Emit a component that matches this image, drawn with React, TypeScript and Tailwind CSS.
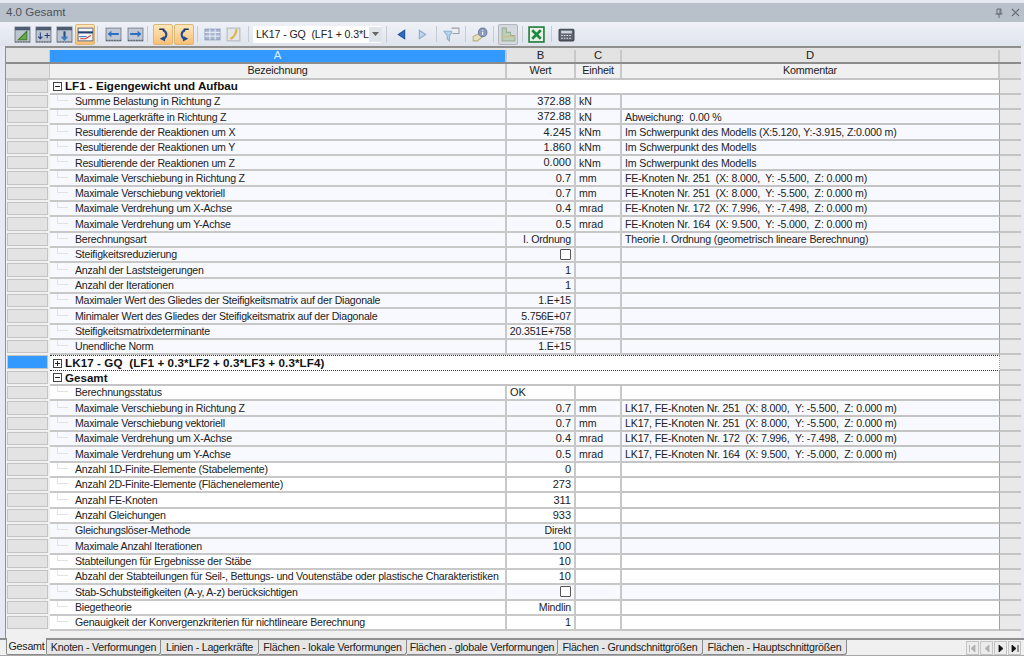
import type { ReactNode } from 'react';

type Row = {
  kind?: 'group' | 'selected';
  open?: boolean;
  a: string;
  b?: string;
  c?: string;
  d?: string;
  check?: boolean;
  left?: boolean;
  tint?: boolean;
};

const rows: Row[] = [
  { kind: 'group', open: true, a: 'LF1 - Eigengewicht und Aufbau' },
  { a: 'Summe Belastung in Richtung Z', b: '372.88', c: 'kN', tint: true },
  { a: 'Summe Lagerkräfte in Richtung Z', b: '372.88', c: 'kN', d: 'Abweichung:  0.00 %', tint: true },
  { a: 'Resultierende der Reaktionen um X', b: '4.245', c: 'kNm', d: 'Im Schwerpunkt des Modells (X:5.120, Y:-3.915, Z:0.000 m)', tint: true },
  { a: 'Resultierende der Reaktionen um Y', b: '1.860', c: 'kNm', d: 'Im Schwerpunkt des Modells', tint: true },
  { a: 'Resultierende der Reaktionen um Z', b: '0.000', c: 'kNm', d: 'Im Schwerpunkt des Modells', tint: true },
  { a: 'Maximale Verschiebung in Richtung Z', b: '0.7', c: 'mm', d: 'FE-Knoten Nr. 251  (X: 8.000,  Y: -5.500,  Z: 0.000 m)', tint: true },
  { a: 'Maximale Verschiebung vektoriell', b: '0.7', c: 'mm', d: 'FE-Knoten Nr. 251  (X: 8.000,  Y: -5.500,  Z: 0.000 m)', tint: true },
  { a: 'Maximale Verdrehung um X-Achse', b: '0.4', c: 'mrad', d: 'FE-Knoten Nr. 172  (X: 7.996,  Y: -7.498,  Z: 0.000 m)', tint: true },
  { a: 'Maximale Verdrehung um Y-Achse', b: '0.5', c: 'mrad', d: 'FE-Knoten Nr. 164  (X: 9.500,  Y: -5.000,  Z: 0.000 m)', tint: true },
  { a: 'Berechnungsart', b: 'I. Ordnung', d: 'Theorie I. Ordnung (geometrisch lineare Berechnung)', tint: true },
  { a: 'Steifigkeitsreduzierung', check: true, tint: true },
  { a: 'Anzahl der Laststeigerungen', b: '1', tint: true },
  { a: 'Anzahl der Iterationen', b: '1', tint: true },
  { a: 'Maximaler Wert des Gliedes der Steifigkeitsmatrix auf der Diagonale', b: '1.E+15', tint: true },
  { a: 'Minimaler Wert des Gliedes der Steifigkeitsmatrix auf der Diagonale', b: '5.756E+07', tint: true },
  { a: 'Steifigkeitsmatrixdeterminante', b: '20.351E+758', tint: true },
  { a: 'Unendliche Norm', b: '1.E+15', tint: true },
  { kind: 'selected', open: false, a: 'LK17 - GQ  (LF1 + 0.3*LF2 + 0.3*LF3 + 0.3*LF4)' },
  { kind: 'group', open: true, a: 'Gesamt' },
  { a: 'Berechnungsstatus', b: 'OK', left: true },
  { a: 'Maximale Verschiebung in Richtung Z', b: '0.7', c: 'mm', d: 'LK17, FE-Knoten Nr. 251  (X: 8.000,  Y: -5.500,  Z: 0.000 m)', tint: true },
  { a: 'Maximale Verschiebung vektoriell', b: '0.7', c: 'mm', d: 'LK17, FE-Knoten Nr. 251  (X: 8.000,  Y: -5.500,  Z: 0.000 m)', tint: true },
  { a: 'Maximale Verdrehung um X-Achse', b: '0.4', c: 'mrad', d: 'LK17, FE-Knoten Nr. 172  (X: 7.996,  Y: -7.498,  Z: 0.000 m)', tint: true },
  { a: 'Maximale Verdrehung um Y-Achse', b: '0.5', c: 'mrad', d: 'LK17, FE-Knoten Nr. 164  (X: 9.500,  Y: -5.000,  Z: 0.000 m)', tint: true },
  { a: 'Anzahl 1D-Finite-Elemente (Stabelemente)', b: '0' },
  { a: 'Anzahl 2D-Finite-Elemente (Flächenelemente)', b: '273' },
  { a: 'Anzahl FE-Knoten', b: '311' },
  { a: 'Anzahl Gleichungen', b: '933' },
  { a: 'Gleichungslöser-Methode', b: 'Direkt', tint: true },
  { a: 'Maximale Anzahl Iterationen', b: '100', tint: true },
  { a: 'Stabteilungen für Ergebnisse der Stäbe', b: '10' },
  { a: 'Abzahl der Stabteilungen für Seil-, Bettungs- und Voutenstäbe oder plastische Charakteristiken', b: '10' },
  { a: 'Stab-Schubsteifigkeiten (A-y, A-z) berücksichtigen', check: true, tint: true },
  { a: 'Biegetheorie', b: 'Mindlin' },
  { a: 'Genauigkeit der Konvergenzkriterien für nichtlineare Berechnung', b: '1' },
];

const tabs = [
  { label: 'Knoten - Verformungen', w: 'w-[114px]' },
  { label: 'Linien - Lagerkräfte', w: 'w-[98px]' },
  { label: 'Flächen - lokale Verformungen', w: 'w-[148px]' },
  { label: 'Flächen - globale Verformungen', w: 'w-[151px]' },
  { label: 'Flächen - Grundschnittgrößen', w: 'w-[145px]' },
  { label: 'Flächen - Hauptschnittgrößen', w: 'w-[144px]' },
];

function Tool({ active, grey, children }: { active?: boolean; grey?: boolean; children: ReactNode }) {
  return (
    <div
      className={`flex h-[21px] w-[20px] shrink-0 items-center justify-center rounded-[2px] ${
        active ? 'border border-[#dcb77a] bg-gradient-to-b from-[#fde8bd] to-[#fbbf73]' : ''
      } ${grey ? 'border border-[#b2b6bd] bg-[#d6dae0]' : ''}`}
    >
      <svg width="17" height="17" viewBox="0 0 16 16">{children}</svg>
    </div>
  );
}

function Sep({ className }: { className: string }) {
  return <div className={`h-[16px] w-px shrink-0 bg-[#c6cad3] ${className}`} />;
}

function TableIcon({ children }: { children: ReactNode }) {
  return (
    <>
      <rect x="1" y="1" width="14" height="14" fill="#bcc4cf" stroke="#7a8390" />
      <rect x="1" y="1" width="14" height="3" fill="#4d5b6e" />
      <path d="M1 15h14" stroke="#5a6470" strokeDasharray="1.500 1" />
      {children}
    </>
  );
}

function ExpandBox({ open }: { open?: boolean }) {
  return (
    <svg width="9" height="9" viewBox="0 0 9 9" className="mr-[3px] shrink-0">
      <rect x="0.5" y="0.5" width="8" height="8" fill="#fff" stroke="#444" />
      <path d="M2 4.5h5" stroke="#222" />
      {!open && <path d="M4.5 2v5" stroke="#222" />}
    </svg>
  );
}

function Toolbar() {
  return (
    <div className="flex h-[24px] shrink-0 items-center bg-gradient-to-b from-[#eef1f8] to-[#dfe3ec] pl-[12px]">
      <div className="flex gap-px">
        <Tool>
          <TableIcon>
            <path d="M4 13L12 5v8z" fill="#6aa846" stroke="#3f7d2a" />
          </TableIcon>
        </Tool>
        <Tool>
          <TableIcon>
            <path d="M5 6v6M3 10l2 2 2-2" stroke="#1f3f77" fill="none" />
            <path d="M9 9h5M11.500 6.500v5" stroke="#1f3f77" />
          </TableIcon>
        </Tool>
        <Tool>
          <TableIcon>
            <path d="M8 5v6" stroke="#244a88" strokeWidth="2" />
            <path d="M4.500 10h7L8 14z" fill="#3b78c8" />
          </TableIcon>
        </Tool>
        <Tool active>
          <rect x="1" y="2" width="14" height="12" fill="#f5f6f8" stroke="#6b7583" />
          <path d="M1 6h14" stroke="#24406e" strokeWidth="2" />
          <path d="M3 12h5l5-3" stroke="#d83a2a" fill="none" />
          <path d="M2 10h7" stroke="#3a6fc0" />
        </Tool>
      </div>
      <Sep className="ml-[2px] mr-[5px]" />
      <div className="flex gap-[2px]">
        <Tool>
          <rect x="1" y="2" width="14" height="12" fill="#c0c8d3" stroke="#838c9a" />
          <path d="M1 13.500h14" stroke="#5a6470" strokeDasharray="1.500 1" />
          <path d="M13 6.500H6V4.500L2.500 7.500 6 10.500V8.500h7z" fill="#2d6fc4" />
        </Tool>
        <Tool>
          <rect x="1" y="2" width="14" height="12" fill="#c0c8d3" stroke="#838c9a" />
          <path d="M1 13.500h14" stroke="#5a6470" strokeDasharray="1.500 1" />
          <path d="M3 6.500h7V4.500l3.500 3L10 10.500V8.500H3z" fill="#2d6fc4" />
        </Tool>
      </div>
      <Sep className="ml-[2px] mr-[5px]" />
      <div className="flex gap-px">
        <Tool active>
          <path d="M4 3h4v2" stroke="#20324f" strokeWidth="1.500" fill="none" />
          <path d="M8 4c3.500 2 3.500 6 .5 8.500" stroke="#1e4f94" strokeWidth="2" fill="none" />
          <path d="M4.500 12l4.500-2.500.5 5z" fill="#1e4f94" />
        </Tool>
        <Tool active>
          <path d="M12 3H8v2" stroke="#20324f" strokeWidth="1.500" fill="none" />
          <path d="M8 4c-3.500 2-3.500 6-.5 8.500" stroke="#1e4f94" strokeWidth="2" fill="none" />
          <path d="M11.500 12L7 9.500l-.5 5z" fill="#1e4f94" />
        </Tool>
      </div>
      <Sep className="ml-[3px] mr-[4px]" />
      <div className="flex gap-px">
        <Tool>
          <rect x="1" y="3" width="14" height="10" fill="#a9b6d2" stroke="#8f9dba" />
          <path d="M1 6h14M1 9.500h14M5.500 3v10M10.500 3v10" stroke="#e4e8f0" />
        </Tool>
        <Tool>
          <rect x="2" y="2" width="12" height="12" fill="#e4e5e6" stroke="#b5b8bd" />
          <path d="M5 12c3-1 5-4 6-9" stroke="#d8b84a" strokeWidth="2" fill="none" />
        </Tool>
      </div>
      <Sep className="ml-[5px] mr-[4px]" />
      <div className="flex h-[17px] w-[128px] shrink-0 items-center justify-between bg-white pl-[3px] text-[10.600px] tracking-[-0.1px] text-[#222]">
        <span className="whitespace-pre">LK17 - GQ  (LF1 + 0.3*L</span>
        <span className="flex h-[15px] w-[13px] shrink-0 items-center justify-center bg-[#dfe3ea]">
          <svg width="7" height="4" viewBox="0 0 7 4">
            <path d="M0 0h7L3.500 4z" fill="#666" />
          </svg>
        </span>
      </div>
      <Sep className="ml-[5px] mr-[4px]" />
      <div className="flex gap-px">
        <Tool>
          <path d="M11 4v8L5 8z" fill="#2f6fc6" stroke="#1d4f9c" />
        </Tool>
        <Tool>
          <path d="M5 4v8l6-4z" fill="#c3d3ec" stroke="#8fa9d4" />
        </Tool>
      </div>
      <Sep className="ml-[4px] mr-[4px]" />
      <Tool>
        <path d="M1 5h8L6 9v5L4 12V9z" fill="#b7d6ee" stroke="#8fb0cc" />
        <path d="M8 2h7v5H9" fill="#eceef2" stroke="#9a9fa8" />
      </Tool>
      <Sep className="ml-[4px] mr-[3px]" />
      <Tool>
        <path d="M2 14V10l6-3 3 3-5 4z" fill="#e6dfbf" stroke="#bdb07c" />
        <circle cx="11" cy="6" r="4" fill="#8b9bbd" stroke="#6e7ea1" />
        <path d="M11 3.500v1M11 5.500V8.500" stroke="#fff" />
      </Tool>
      <Sep className="ml-[4px] mr-[4px]" />
      <Tool grey>
        <path d="M2 2h4v4h4v3h4v5H2z" fill="#bcd0b8" stroke="#9ab095" />
        <path d="M2 10h12" stroke="#d2b880" />
      </Tool>
      <Sep className="ml-[4px] mr-[3px]" />
      <Tool>
        <rect x="1" y="1" width="14" height="14" fill="#e8f3e6" stroke="#1f7a3a" strokeWidth="1.500" />
        <path d="M4 4l8 8M12 4l-8 8" stroke="#1c8a3e" strokeWidth="2.500" />
      </Tool>
      <Sep className="ml-[5px] mr-[4px]" />
      <Tool>
        <rect x="1" y="3" width="14" height="11" rx="1" fill="#5d6570" stroke="#3d444d" />
        <rect x="3" y="4.500" width="10" height="2.500" fill="#cfd6dd" />
        <path d="M3 9h10M3 11.500h10" stroke="#e4e7ea" strokeDasharray="1.500 1" />
      </Tool>
    </div>
  );
}

function HeaderRows() {
  const top = 'flex items-center justify-center border-r-2 border-[#c8c8c8] text-[#222]';
  const sub = 'flex items-center justify-center border-r-2 border-[#c8c8c8] tracking-[-0.2px] text-[10.800px]';
  return (
    <>
      <div className="flex h-[16px] shrink-0 border-b-2 border-[#8c8c8c] bg-[#e3e3e3] pt-[2px]">
        <div className="w-[44px] shrink-0 border-r border-[#c8c8c8]" />
        <div className={`${top} w-[457px] bg-[#3399ff] text-[#dfeeff]`}>A</div>
        <div className={`${top} w-[69px]`}>B</div>
        <div className={`${top} w-[46px]`}>C</div>
        <div className={`${top} w-[378px] border-[#9c9c9c]`}>D</div>
        <div className="w-[21px] shrink-0" />
      </div>
      <div className="flex h-[15.500px] shrink-0 border-b-2 border-[#c4c4c4] bg-[#f0f0f0]">
        <div className="w-[44px] shrink-0 border-r border-[#c8c8c8] bg-[#e3e3e3]" />
        <div className={`${sub} w-[457px]`}>Bezeichnung</div>
        <div className={`${sub} w-[69px]`}>Wert</div>
        <div className={`${sub} w-[46px]`}>Einheit</div>
        <div className={`${sub} w-[378px] border-[#9c9c9c]`}>Kommentar</div>
        <div className="w-[21px] shrink-0 bg-[#e3e3e3]" />
      </div>
    </>
  );
}

function DataRow({ row }: { row: Row }) {
  const isGroup = row.kind === 'group' || row.kind === 'selected';
  const selected = row.kind === 'selected';
  const bg = row.tint ? 'bg-[#f7f9ff]' : 'bg-white';
  const line = 'border-r-2 border-[#c8c8c8]';
  const wordy = row.b ? /[a-z]/i.test(row.b) && row.b !== 'OK' : false;
  return (
    <div className="flex h-[15.330px] shrink-0 overflow-hidden">
      <div className="w-[44px] shrink-0 pb-[2px] pl-px pr-[2px]">
        <div className={`h-full border border-[#c4c4c4] ${selected ? 'bg-[#3399ff]' : 'bg-[#e3e3e3]'}`} />
      </div>
      {isGroup ? (
        <div
          className={`flex w-[950px] shrink-0 items-center whitespace-pre border-r border-r-[#a0a0a0] bg-white pl-[3px] text-[11.600px] font-bold text-[#111] ${
            selected ? 'border-y border-dotted border-y-[#333] tracking-[0.1px]' : 'border-b-2 border-b-[#c4c4c4]'
          }`}
        >
          <ExpandBox open={row.open} />
          {row.a}
        </div>
      ) : (
        <>
          <div className={`flex w-[457px] shrink-0 items-center whitespace-pre border-b-2 border-[#c4c4c4] pl-[7px] text-[10.600px] tracking-[-0.23px] ${line} ${bg}`}>
            <span className="mb-[7px] mr-[7px] h-[8px] w-[11px] shrink-0 self-end border-b border-l border-[#e2e2e2]" />
            {row.a}
          </div>
          <div
            className={`flex w-[69px] shrink-0 items-center border-b-2 border-[#c4c4c4] ${line} ${bg} ${
              row.left ? 'justify-start pl-[3px]' : 'justify-end pr-[3px]'
            } ${wordy ? 'text-[10.600px] tracking-[-0.2px]' : 'text-[11px]'}`}
          >
            {row.check ? <span className="mb-px h-[11px] w-[11px] rounded-[1px] border border-[#555] bg-white" /> : row.b}
          </div>
          <div className={`flex w-[46px] shrink-0 items-center border-b-2 border-[#c4c4c4] pl-[3px] text-[10.600px] ${line} ${bg}`}>{row.c}</div>
          <div className={`flex w-[378px] shrink-0 items-center whitespace-pre border-b-2 border-b-[#c4c4c4] border-r border-r-[#a0a0a0] pl-[3px] text-[10.600px] tracking-[-0.16px] ${bg}`}>
            {row.d}
          </div>
        </>
      )}
      <div className="w-[21px] shrink-0 border-b-2 border-[#c4c4c4] bg-[#e9e9e9]" />
    </div>
  );
}

function TabStrip() {
  return (
    <div className="flex h-[18px] shrink-0 items-start border-t-2 border-b border-t-[#8f8f8f] border-b-[#a8a8a8] bg-[#f0f0f0] pl-[6px] text-[10.700px] tracking-[-0.25px] text-[#222]">
      <div className="-mt-[2px] flex h-[17px] w-[41px] shrink-0 items-center justify-center whitespace-nowrap rounded-b-[2px] border-x border-b border-[#8a8a8a] bg-[#f0f0f0]">
        Gesamt
      </div>
      {tabs.map((t) => (
        <div
          key={t.label}
          className={`flex h-[15px] ${t.w} shrink-0 items-center justify-center whitespace-nowrap rounded-br-[3px] border-b border-r border-[#8a8a8a] bg-[#e6e6e6]`}
        >
          {t.label}
        </div>
      ))}
      <div className="ml-auto mr-[3px] mt-px flex gap-px">
        <NavBtn d="M7 2v7L3 5.500zM1.500 2v7" dim />
        <NavBtn d="M7 2v7L3 5.500z" dim />
        <NavBtn d="M3 2v7l4-3.500z" />
        <NavBtn d="M2 2v7l4-3.500zM8 2v7" />
      </div>
    </div>
  );
}

function NavBtn({ d, dim }: { d: string; dim?: boolean }) {
  return (
    <div className="flex h-[14px] w-[13px] items-center justify-center border border-[#c4c4c4] bg-[#ececec]">
      <svg width="10" height="11" viewBox="0 0 10 11">
        <path d={d} fill={dim ? '#b0b0b0' : '#111'} stroke={dim ? '#b0b0b0' : '#111'} strokeWidth="0.800" />
      </svg>
    </div>
  );
}

export default function App() {
  return (
    <div className="flex h-[656px] w-[1024px] flex-col overflow-hidden bg-[#e6e9f2] pt-[3px] font-['Liberation_Sans',sans-serif] text-[11.300px] leading-none text-[#222]">
      <div className="flex h-[19px] shrink-0 items-center justify-between bg-[#b8c0ca] pl-[6px] pr-[4px] text-[11.500px] text-[#4d545e]">
        <span>4.0 Gesamt</span>
        <span className="flex items-center gap-[8px] text-[#666d78]">
          <svg width="8" height="10" viewBox="0 0 8 10">
            <path d="M2 1h4v5H2zM0.500 6h7M4 6v4M5 1v5" fill="none" stroke="#666d78" />
          </svg>
          <svg width="9" height="9" viewBox="0 0 9 9">
            <path d="M1 1l7 7M8 1L1 8" stroke="#666d78" strokeWidth="1.200" />
          </svg>
        </span>
      </div>
      <Toolbar />
      <div className="ml-[5px] mr-[3px] flex min-h-0 flex-1 flex-col border-l border-t-2 border-[#8f8f8f] bg-[#f0f0f0]">
        <HeaderRows />
        {rows.map((r, i) => (
          <DataRow key={i} row={r} />
        ))}
      </div>
      <TabStrip />
    </div>
  );
}
